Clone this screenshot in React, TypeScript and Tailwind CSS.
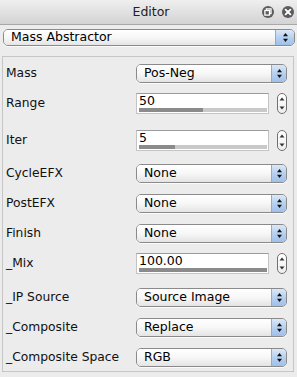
import React from "react";

const Arrows = () => (
  <svg width="7" height="11" viewBox="0 0 7 11">
    <path d="M3.5 1 L6 4.2 L1 4.2 Z" fill="#111" />
    <path d="M3.5 10 L6 6.8 L1 6.8 Z" fill="#111" />
  </svg>
);

function Select({ value, wide }: { value: string; wide?: boolean }) {
  return (
    <div
      className={`flex ${wide ? "h-[17px]" : "h-[19px]"} w-full rounded-[5px] border border-[#8a8a8a] overflow-hidden shadow-[0_1px_0_rgba(255,255,255,0.8)]`}
    >
      <div className="flex-1 flex items-center pl-[7px] bg-gradient-to-b from-[#ffffff] via-[#f7f7f7] to-[#e4e4e4] text-[12.5px] text-black leading-none">
        {value}
      </div>
      <div
        className={`${wide ? "w-[19px]" : "w-[15px]"} flex items-center justify-center border-l border-[#9aa9bd] bg-gradient-to-b from-[#dbe8f7] via-[#b7d0ef] to-[#9ec0ea]`}
      >
        <Arrows />
      </div>
    </div>
  );
}

function Stepper() {
  return (
    <div className="w-[10px] h-[21px] rounded-full border border-[#707070] bg-gradient-to-b from-white to-[#eeeeee] flex flex-col items-center justify-between py-[3px]">
      <svg width="6" height="4" viewBox="0 0 6 4">
        <path d="M3 0.5 L5.5 3.5 L0.5 3.5 Z" fill="#333" />
      </svg>
      <svg width="6" height="4" viewBox="0 0 6 4">
        <path d="M3 3.5 L5.5 0.5 L0.5 0.5 Z" fill="#333" />
      </svg>
    </div>
  );
}

function Field({ value, pct }: { value: string; pct: number }) {
  return (
    <div className="flex items-center gap-[8px]">
      <div className="w-[134px] h-[21px] bg-white border border-[#c4c4c4] border-t-[#9c9c9c] flex flex-col justify-between pl-[2px] pr-[1px] pb-[1px]">
        <div className="text-[12.5px] leading-[14px] text-black">{value}</div>
        <div className="h-[4px] w-full bg-[#c9c9c9] flex">
          <div className="h-full bg-[#8b8b8b]" style={{ width: `${pct}%` }} />
        </div>
      </div>
      <Stepper />
    </div>
  );
}

function Row({
  label,
  children,
  mt,
}: {
  label: string;
  children: React.ReactNode;
  mt?: string;
}) {
  return (
    <div className={`flex items-center h-[30px] ${mt ?? ""}`}>
      <div className="w-[133px] pl-[3px] text-[12.3px] text-[#111] whitespace-nowrap">{label}</div>
      <div className="w-[151px]">{children}</div>
    </div>
  );
}

export default function App() {
  return (
    <div
      className="w-[297px] h-[377px] bg-[#ececec] overflow-hidden"
      style={{ fontFamily: '"DejaVu Sans", "Liberation Sans", sans-serif' }}
    >
      <div className="h-[25px] bg-gradient-to-b from-[#efefef] to-[#d3d3d3] border-b border-[#a8a8a8] flex items-center">
        <div className="flex-1 pl-[40px] text-center text-[12.5px] text-[#222]">Editor</div>
        <div className="flex items-center gap-[8px] pr-[3px]">
          <svg width="12" height="12" viewBox="0 0 12 12">
            <circle cx="6" cy="6" r="6" fill="#5c5c5c" />
            <rect x="4.4" y="2.9" width="4.6" height="4.6" fill="none" stroke="#fff" strokeWidth="1.3" />
            <rect x="2.9" y="4.5" width="4.6" height="4.6" fill="#5c5c5c" stroke="#fff" strokeWidth="1.3" />
          </svg>
          <svg width="12" height="12" viewBox="0 0 12 12">
            <circle cx="6" cy="6" r="6" fill="#5c5c5c" />
            <path d="M3.6 3.6 L8.4 8.4 M8.4 3.6 L3.6 8.4" stroke="#fff" strokeWidth="1.8" strokeLinecap="round" />
          </svg>
        </div>
      </div>
      <div className="pl-[3px] pr-[2px] pt-[4px] h-[31px]">
        <Select value="Mass Abstractor" wide />
      </div>
      <div className="ml-[2px] mr-[3px] h-[316px] border-l border-t border-r border-b border-[#c6c6c6] pt-[1px]">
        <Row label="Mass">
          <Select value="Pos-Neg" />
        </Row>
        <Row label="Range">
          <Field value="50" pct={50} />
        </Row>
        <Row label="Iter" mt="mt-[7px]">
          <Field value="5" pct={28} />
        </Row>
        <Row label="CycleEFX" mt="mt-[3px]">
          <Select value="None" />
        </Row>
        <Row label="PostEFX">
          <Select value="None" />
        </Row>
        <Row label="Finish">
          <Select value="None" />
        </Row>
        <Row label="_Mix">
          <Field value="100.00" pct={100} />
        </Row>
        <Row label="_IP Source" mt="mt-[4px]">
          <Select value="Source Image" />
        </Row>
        <Row label="_Composite">
          <Select value="Replace" />
        </Row>
        <Row label="_Composite Space">
          <Select value="RGB" />
        </Row>
      </div>
    </div>
  );
}
